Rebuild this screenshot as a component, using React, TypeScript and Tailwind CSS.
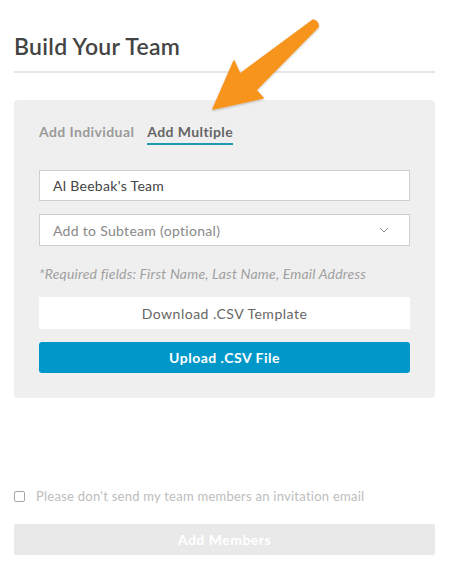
import React from "react";

function Arrow() {
  return (
    <svg
      className="pointer-events-none absolute left-0 top-0"
      width="449"
      height="140"
      viewBox="0 0 449 140"
    >
      <defs>
        <filter id="sh" x="-20%" y="-20%" width="140%" height="140%">
          <feDropShadow dx="0" dy="1" stdDeviation="1.2" floodColor="#000" floodOpacity="0.25" />
        </filter>
      </defs>
      <path
        d="M213 109 L234 61 L240 74 L313 20 Q319 22 318 27 L256 90 L263 98 Z"
        fill="#f7941d"
        stroke="#f7941d"
        strokeWidth="1.5"
        strokeLinejoin="round"
        filter="url(#sh)"
      />
    </svg>
  );
}

export default function App() {
  return (
    <div
      className="relative w-[449px] h-[563px] bg-white px-[14px] pt-[32px]"
      style={{ fontFamily: "Lato, 'Open Sans', sans-serif" }}
    >
      <h1 className="text-[23px] leading-[28px] font-semibold tracking-[0.3px] text-[#444]">Build Your Team</h1>
      <div className="mt-[11px] h-[2px] bg-[#e6e6e6]" />

      <div className="mt-[27px] rounded-[4px] bg-[#efefef] px-[25px] pt-[22px] pb-[25px]">
        <div className="flex items-end gap-[13px] text-[14px] leading-[20px] font-bold tracking-[0.4px]">
          <span className="pb-[3px] text-[#9a9a9a]">Add Individual</span>
          <span className="border-b-2 border-[#1d9bb2] pb-[1px] text-[#666]">Add Multiple</span>
        </div>

        <div className="mt-[25px] flex h-[31px] items-center border border-[#cfcfcf] bg-white px-[13px] text-[14px] tracking-[0.3px] text-[#444]">
          Al Beebak's Team
        </div>
        <div className="mt-[13px] flex h-[32px] items-center justify-between border border-[#cfcfcf] bg-white pl-[13px] pr-[20px] text-[14px] tracking-[0.3px] text-[#888]">
          <span>Add to Subteam (optional)</span>
          <svg width="10" height="6" viewBox="0 0 10 6" fill="none">
            <path d="M1 1 L5 5 L9 1" stroke="#999" strokeWidth="1" />
          </svg>
        </div>

        <p className="mt-[19px] text-[14px] leading-[18px] italic tracking-[0.2px] text-[#a0a0a0]">
          *Required fields: First Name, Last Name, Email Address
        </p>

        <div className="mt-[14px] flex h-[32px] items-center justify-center bg-white text-[14px] tracking-[0.5px] text-[#666]">
          Download .CSV Template
        </div>
        <div className="mt-[13px] flex h-[31px] items-center justify-center rounded-[3px] bg-[#0098c9] text-[14px] font-bold tracking-[0.5px] text-white">
          Upload .CSV File
        </div>
      </div>

      <label className="mt-[89px] flex items-center gap-[11px] text-[13px] leading-[18px] tracking-[0.25px] text-[#bdbdbd]">
        <span className="h-[11px] w-[11px] rounded-[2px] border border-[#a6a6a6] bg-white" />
        Please don't send my team members an invitation email
      </label>

      <div className="mt-[19px] flex h-[31px] items-center justify-center rounded-[2px] bg-[#e9e9e9] text-[14px] font-bold tracking-[0.5px] text-white">
        Add Members
      </div>

      <Arrow />
    </div>
  );
}
